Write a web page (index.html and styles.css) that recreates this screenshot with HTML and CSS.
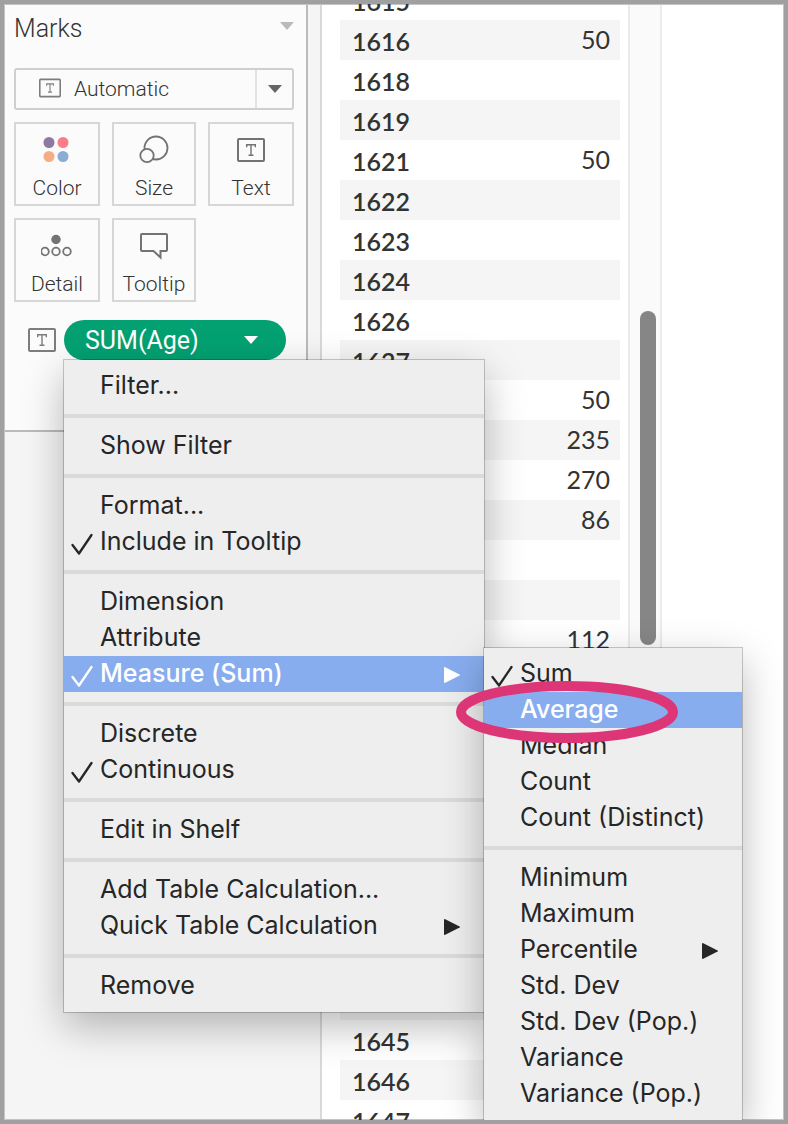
FILE: index.html
```html
<!DOCTYPE html>
<html lang="en">
<head>
<meta charset="utf-8">
<title>Marks</title>
<link rel="stylesheet" href="styles.css">
</head>
<body>
<svg class="defs" aria-hidden="true">
  <symbol id="check" viewBox="0 0 24 24"><path d="M2.500 13 L9 21.500 L21.500 3" fill="none" stroke="currentColor" stroke-width="2.300" stroke-linecap="round" stroke-linejoin="round"/></symbol>
  <symbol id="arrow" viewBox="0 0 16 16"><path d="M.8 0 Q0 0 0 .8 V15.200 Q0 16 .8 16 L15.600 8.600 Q16.300 8 15.600 7.400 Z" fill="currentColor"/></symbol>
  <symbol id="down" viewBox="0 0 14 8"><path d="M0 0 H14 L7 8 Z" fill="currentColor"/></symbol>
  <symbol id="text-mark" viewBox="0 0 28 24"><rect x="1" y="1" width="26" height="22" rx="1" fill="none" stroke="currentColor" stroke-width="2"/><path d="M9.700 9.200 V6.700 H18.300 V9.200 M14 6.700 V17.300 M11.500 17.300 H16.500" fill="none" stroke="currentColor" stroke-width="1.400"/></symbol>
</svg>
<div class="frame">
  <aside class="side">
    <section class="marks">
      <header class="marks-head">
        <h1 class="marks-title">Marks</h1>
        <svg class="down faint" aria-hidden="true"><use href="#down"/></svg>
      </header>
      <div class="mark-type">
        <svg class="type-icon" aria-hidden="true"><use href="#text-mark"/></svg>
        <select class="type-select" aria-label="Mark type"><option>Automatic</option></select>
        <span class="type-toggle"><svg class="down" aria-hidden="true"><use href="#down"/></svg></span>
      </div>
      <div class="cards">
        <button class="card"><svg class="card-icon" viewBox="0 0 32 32" aria-hidden="true"><circle cx="8" cy="8.500" r="5.500" fill="#8e79a1"/><circle cx="22" cy="8.500" r="5.500" fill="#fa7d8b"/><circle cx="8" cy="22.500" r="5.500" fill="#f4ad85"/><circle cx="22" cy="22.500" r="5.500" fill="#8badd3"/></svg>Color</button>
        <button class="card"><svg class="card-icon" viewBox="0 0 32 32" aria-hidden="true"><g fill="#fbfbfb" stroke="#737373" stroke-width="1.800"><circle cx="18" cy="14" r="11.500"/><circle cx="9" cy="21.500" r="6.700"/></g></svg>Size</button>
        <button class="card"><svg class="card-icon" aria-hidden="true"><use href="#text-mark" x="2" y="4" width="28" height="24"/></svg>Text</button>
        <button class="card"><svg class="card-icon" viewBox="0 0 32 32" aria-hidden="true"><circle cx="15" cy="9.500" r="4.700" fill="#737373"/><g fill="none" stroke="#737373" stroke-width="1.800"><circle cx="4" cy="21.500" r="3.800"/><circle cx="15" cy="21.500" r="3.800"/><circle cx="26" cy="21.500" r="3.800"/></g></svg>Detail</button>
        <button class="card"><svg class="card-icon" viewBox="0 0 32 32" aria-hidden="true"><path d="M4 4 H28 Q29 4 29 5 V20 Q29 21 28 21 H22.500 V27.500 L15.500 21 H4 Q3 21 3 20 V5 Q3 4 4 4 Z" fill="none" stroke="#737373" stroke-width="2"/></svg>Tooltip</button>
      </div>
      <div class="field">
        <svg class="field-icon" aria-hidden="true"><use href="#text-mark"/></svg>
        <div class="pill-wrap">
          <button class="pill" aria-haspopup="menu" aria-expanded="true">SUM(Age)<svg class="down" aria-hidden="true"><use href="#down"/></svg></button>
          <ul class="menu" role="menu">
            <li><button class="item">Filter...</button></li>
            <li class="rule"></li>
            <li><button class="item">Show Filter</button></li>
            <li class="rule"></li>
            <li><button class="item">Format...</button></li>
            <li><button class="item"><svg class="check" aria-hidden="true"><use href="#check"/></svg>Include in Tooltip</button></li>
            <li class="rule"></li>
            <li><button class="item">Dimension</button></li>
            <li><button class="item">Attribute</button></li>
            <li class="parent">
              <button class="item active"><svg class="check" aria-hidden="true"><use href="#check"/></svg>Measure (Sum)<svg class="arrow" aria-hidden="true"><use href="#arrow"/></svg></button>
              <ul class="menu submenu" role="menu">
                <li><button class="item"><svg class="check" aria-hidden="true"><use href="#check"/></svg>Sum</button></li>
                <li class="parent"><button class="item active">Average</button><svg class="ring" viewBox="0 0 222 62" aria-hidden="true"><ellipse cx="111" cy="31" rx="106" ry="26" fill="none" stroke="#dc3677" stroke-width="10"/></svg></li>
                <li><button class="item">Median</button></li>
                <li><button class="item">Count</button></li>
                <li><button class="item">Count (Distinct)</button></li>
                <li class="rule"></li>
                <li><button class="item">Minimum</button></li>
                <li><button class="item">Maximum</button></li>
                <li><button class="item">Percentile<svg class="arrow" aria-hidden="true"><use href="#arrow"/></svg></button></li>
                <li><button class="item">Std. Dev</button></li>
                <li><button class="item">Std. Dev (Pop.)</button></li>
                <li><button class="item">Variance</button></li>
                <li><button class="item">Variance (Pop.)</button></li>
              </ul>
            </li>
            <li class="rule"></li>
            <li><button class="item">Discrete</button></li>
            <li><button class="item"><svg class="check" aria-hidden="true"><use href="#check"/></svg>Continuous</button></li>
            <li class="rule"></li>
            <li><button class="item">Edit in Shelf</button></li>
            <li class="rule"></li>
            <li><button class="item">Add Table Calculation...</button></li>
            <li><button class="item">Quick Table Calculation<svg class="arrow" aria-hidden="true"><use href="#arrow"/></svg></button></li>
            <li class="rule"></li>
            <li><button class="item">Remove</button></li>
          </ul>
        </div>
      </div>
    </section>
  </aside>
  <main class="view">
    <table class="data">
      <tbody>
        <tr><th scope="row">1615</th><td></td></tr>
        <tr><th scope="row">1616</th><td>50</td></tr>
        <tr><th scope="row">1618</th><td></td></tr>
        <tr><th scope="row">1619</th><td></td></tr>
        <tr><th scope="row">1621</th><td>50</td></tr>
        <tr><th scope="row">1622</th><td></td></tr>
        <tr><th scope="row">1623</th><td></td></tr>
        <tr><th scope="row">1624</th><td></td></tr>
        <tr><th scope="row">1626</th><td></td></tr>
        <tr><th scope="row">1627</th><td></td></tr>
        <tr><th></th><td>50</td></tr>
        <tr><th></th><td>235</td></tr>
        <tr><th></th><td>270</td></tr>
        <tr><th></th><td>86</td></tr>
        <tr><th></th><td></td></tr>
        <tr><th></th><td></td></tr>
        <tr><th></th><td>112</td></tr>
        <tr><th></th><td></td></tr>
        <tr><th></th><td></td></tr>
        <tr><th></th><td></td></tr>
        <tr><th></th><td></td></tr>
        <tr><th></th><td></td></tr>
        <tr><th></th><td></td></tr>
        <tr><th></th><td></td></tr>
        <tr><th></th><td></td></tr>
        <tr><th></th><td></td></tr>
        <tr><th scope="row">1645</th><td></td></tr>
        <tr><th scope="row">1646</th><td></td></tr>
        <tr><th scope="row">1647</th><td></td></tr>
      </tbody>
    </table>
    <div class="track"><div class="thumb"></div></div>
  </main>
</div>
</body>
</html>
```

FILE: styles.css
```css
* { box-sizing: border-box; }
body { margin: 0; background: #a0a0a0; color: #333; font-family: Roboto, "Liberation Sans", sans-serif; }
button, select { font: inherit; color: inherit; }
svg { flex: none; }
.defs { position: absolute; width: 0; height: 0; }

.frame {
  display: flex;
  height: 100vh;
  overflow: hidden;
  border: 4px solid #a0a0a0;
  background: #fff;
  box-shadow: inset 0 0 0 1px #c4c4c4;
  padding: 1px;
}

.side { flex: none; width: 317px; background: #f5f5f5; border-right: 2px solid #d9d9d9; }
.marks {
  width: 303px;
  min-height: 427px;
  padding: 8px 12px 0 9px;
  background: #fbfbfb;
  border-right: 2px solid #bababa;
  border-bottom: 2px solid #bababa;
}
.marks-head { display: flex; align-items: center; justify-content: space-between; height: 30px; margin-bottom: 25px; }
.marks-title { margin: 0; font-size: 25px; font-weight: 300; }
.down { width: 14px; height: 8px; color: #666; }
.faint { color: #bababa; margin-top: -5px; }

.mark-type {
  position: relative;
  display: flex;
  height: 42px;
  margin-bottom: 12px;
  border: 2px solid #cfcfcf;
  border-radius: 3px;
}
.type-icon { position: absolute; left: 23px; top: 8px; width: 22px; height: 20px; color: #7d7d7d; pointer-events: none; }
.type-select {
  flex: 1;
  appearance: none;
  border: 0;
  background: transparent;
  padding: 0 0 0 58px;
  font-size: 21px;
  font-weight: 300;
}
.type-toggle { display: flex; align-items: center; justify-content: center; width: 37px; border-left: 2px solid #e2e2e2; pointer-events: none; }

.cards { display: grid; grid-template-columns: 86px 84px 86px; gap: 12px; margin-bottom: 18px; }
.card {
  display: flex;
  flex-direction: column;
  align-items: center;
  justify-content: space-between;
  height: 84px;
  padding: 10px 0 4px;
  border: 2px solid #d6d6d6;
  background: #fbfbfb;
  font-size: 21px;
  font-weight: 300;
  line-height: 24px;
}
.card-icon { width: 32px; height: 32px; color: #737373; }

.field { display: flex; align-items: center; gap: 8px; padding-left: 14px; }
.field-icon { width: 28px; height: 24px; color: #7d7d7d; }
.pill-wrap { position: relative; width: 222px; }
.pill {
  display: flex;
  align-items: center;
  justify-content: space-between;
  width: 100%;
  height: 40px;
  padding: 0 28px 0 21px;
  border: 0;
  border-radius: 20px;
  background: #03a172;
  color: #fff;
  font-size: 25px;
}
.pill .down { color: #fff; }

.menu {
  position: absolute;
  z-index: 2;
  top: 100%;
  left: 0;
  width: 420px;
  margin: 0;
  padding: 8px 0;
  list-style: none;
  background: #eee;
  color: #262626;
  font-family: Inter, "Liberation Sans", sans-serif;
  font-size: 25px;
  font-weight: 400;
  box-shadow: 0 0 0 1px rgba(0, 0, 0, .2), 0 14px 38px rgba(0, 0, 0, .28);
}
.submenu { top: -8px; left: 100%; width: 258px; }
.parent { position: relative; }
.item {
  position: relative;
  display: flex;
  align-items: center;
  justify-content: space-between;
  width: 100%;
  height: 36px;
  padding: 0 24px 2px 36px;
  border: 0;
  background: none;
  text-align: left;
  white-space: nowrap;
}
.active { background: #88adef; color: #fff; font-weight: 500; }
.rule { height: 4px; margin: 10px 0; background: #dadada; }
.check { position: absolute; left: 6px; top: 8px; width: 24px; height: 24px; }
.arrow { width: 16px; height: 16px; margin-top: 4px; }
.ring { position: absolute; z-index: 1; left: -28px; top: -11px; width: 222px; height: 62px; pointer-events: none; }

.view { display: flex; flex: 1; min-width: 0; padding-left: 18px; }
.data {
  flex: none;
  align-self: flex-start;
  width: 280px;
  margin: -25px 8px 0 0;
  border-collapse: collapse;
  font-family: Lato, "Liberation Sans", sans-serif;
  font-size: 25px;
  line-height: 30px;
}
.data tr { height: 40px; }
.data tr:nth-child(even) { background: #f5f5f5; }
.data th { padding: 2px 0 0 12px; text-align: left; font-weight: 600; }
.data td { padding: 0 10px 2px 0; text-align: right; font-weight: 400; }
.track { flex: none; width: 34px; padding: 306px 4px 0 10px; background: #fafafa; border: solid #ebebeb; border-width: 0 2px; }
.thumb { height: 334px; border-radius: 8px; background: #868686; }
```
